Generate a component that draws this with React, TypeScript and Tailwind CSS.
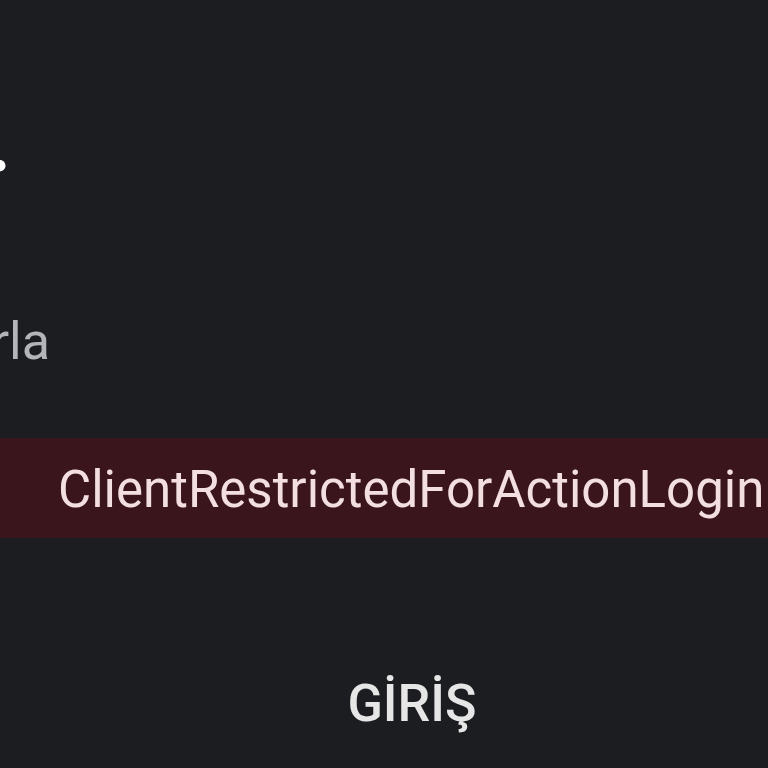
export default function App() {
  return (
    <div className="h-[768px] w-[768px] overflow-hidden bg-[#1c1d20] font-['Roboto',sans-serif] pt-[112px]">
      <div className="flex h-[68px] w-[10px] justify-end overflow-hidden">
        <span className="whitespace-nowrap text-[70px] font-black leading-none text-white">Giriş.</span>
      </div>
      <div className="mt-[136px] flex h-[52px] w-[50px] justify-end overflow-hidden">
        <span className="whitespace-nowrap text-[52px] leading-none text-[#b4b5b8]">Beni hatırla</span>
      </div>
      <div className="mt-[70px] flex h-[100px] items-center bg-[#3b151c] pl-[58px] pt-[3px]">
        <span className="whitespace-nowrap text-[51px] leading-none text-[#f3dfe2]">ClientRestrictedForActionLogin</span>
      </div>
      <div className="mt-[140px] flex justify-center pl-[56px]">
        <button className="text-[52px] font-medium leading-none text-[#e6e6e6]">GİRİŞ</button>
      </div>
    </div>
  )
}
